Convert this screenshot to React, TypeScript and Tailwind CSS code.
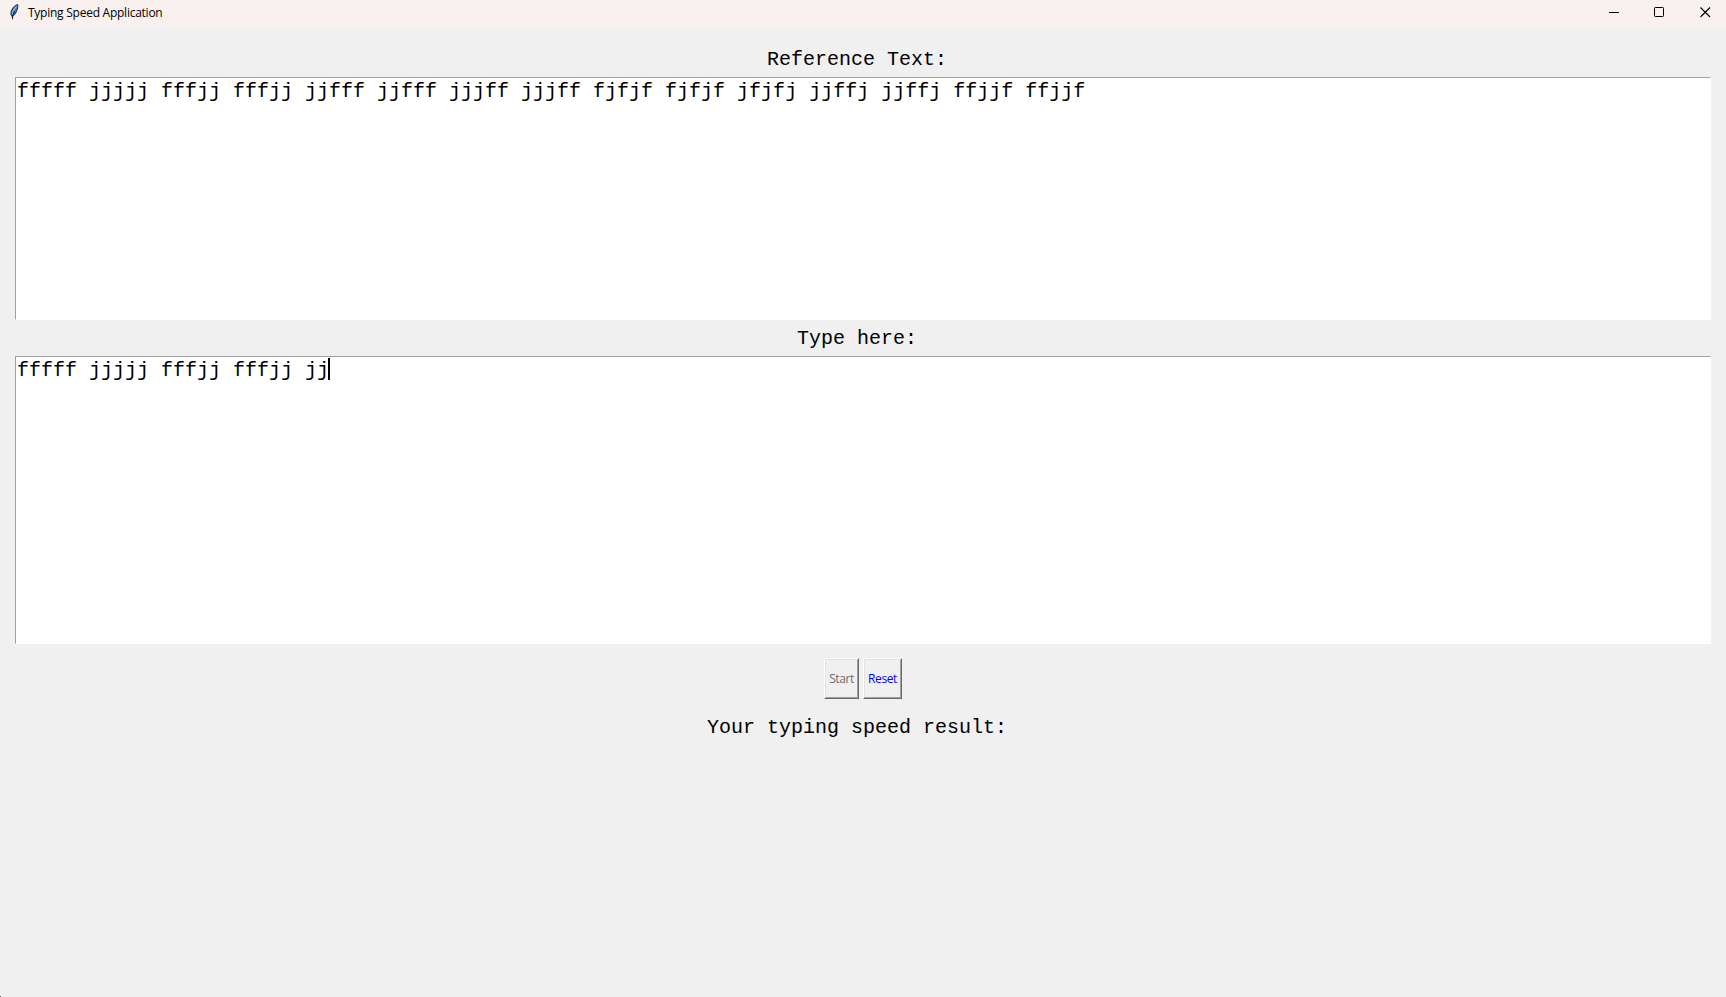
import React from "react";

const mono = "font-['Liberation_Mono',monospace] text-[20px] leading-[23px] whitespace-pre text-black";

function FeatherIcon() {
  return (
    <svg width="9" height="16" viewBox="0 0 9 16" className="shrink-0">
      <path d="M7.6 0.6C5.4 1 2.5 3.6 1.3 7.2C0.7 9.4 0.9 11 1.9 12.4C3.9 12 5.6 9.8 6.6 7C7.6 4.4 8.2 2 7.6 0.6Z" fill="#3f7fd6" stroke="#20242c" strokeWidth="1" />
      <path d="M6.7 2C4.6 4 3.1 7 2.4 10.4" stroke="#a9cbf5" strokeWidth="1" fill="none" />
      <path d="M4.6 7L2.6 12V15.2" stroke="#111" strokeWidth="1" fill="none" />
    </svg>
  );
}

function TitleBar() {
  return (
    <header className="flex h-[28px] shrink-0 items-start bg-[#f9f1ef] pl-[10px] pr-[15px]">
      <div className="flex pt-[4px]">
        <FeatherIcon />
      </div>
      <div className="ml-[9px] pt-[4px] font-['Open_Sans',sans-serif] text-[12px] leading-[17px] tracking-[-0.25px] whitespace-nowrap text-black">Typing Speed Application</div>
      <div className="ml-auto flex pt-[7px]">
        <svg className="mr-[35px]" width="10" height="11" viewBox="0 0 10 11" shapeRendering="crispEdges">
          <path d="M0 5.5H10" stroke="#000" />
        </svg>
        <svg className="mr-[36px]" width="10" height="10" viewBox="0 0 10 10">
          <rect x="0.5" y="0.5" width="9" height="9" rx="0.8" fill="none" stroke="#000" />
        </svg>
        <svg width="11" height="11" viewBox="0 0 11 11">
          <path d="M0.5 0.5L10 10M10 0.5L0.5 10" stroke="#000" strokeWidth="1.1" />
        </svg>
      </div>
    </header>
  );
}

function TextPanel({ text, height, caret }: { text: string; height: string; caret?: boolean }) {
  return (
    <div className={`mx-[15px] flex shrink-0 items-start border border-t-[#a0a0a0] border-l-[#a0a0a0] border-r-white border-b-white bg-white pt-[1px] pl-[1px] ${height}`}>
      <div className={`${mono} pt-[1px]`}>{text}</div>
      {caret && <div className="-ml-px h-[22px] w-[2px] bg-black" />}
    </div>
  );
}

const buttonFace =
  "flex h-[41px] items-center justify-center border border-t-white border-l-white border-r-[#696969] border-b-[#696969] bg-[#f0f0f0] font-['Open_Sans',sans-serif] text-[12px] leading-[15px] tracking-[-0.4px]";
const buttonInner =
  "flex h-full w-full items-center justify-center border border-t-[#e3e3e3] border-l-[#e3e3e3] border-r-[#a0a0a0] border-b-[#a0a0a0] pb-px";

export default function App() {
  return (
    <div className="flex h-[997px] w-full flex-col overflow-hidden bg-[#f0f0f0]">
      <TitleBar />
      <div className={`${mono} mt-[20px] mb-[6px] self-center`}>{"Reference Text: "}</div>
      <TextPanel height="h-[243px]" text="fffff jjjjj fffjj fffjj jjfff jjfff jjjff jjjff fjfjf fjfjf jfjfj jjffj jjffj ffjjf ffjjf" />
      <div className={`${mono} mt-[7px] mb-[6px] self-center`}>{"Type here: "}</div>
      <TextPanel height="h-[288px]" text="fffff jjjjj fffjj fffjj jj" caret />
      <div className="mt-[14px] flex justify-center gap-[4px]">
        <button className={`${buttonFace} w-[35px] text-[#6d6d6d]`}>
          <span className={buttonInner}>Start</span>
        </button>
        <button className={`${buttonFace} w-[39px] text-[#0000ff]`}>
          <span className={buttonInner}>Reset</span>
        </button>
      </div>
      <div className={`${mono} mt-[17px] self-center`}>{"Your typing speed result: "}</div>
      <div className="mt-auto h-px w-[1px] bg-[#555]" />
    </div>
  );
}
